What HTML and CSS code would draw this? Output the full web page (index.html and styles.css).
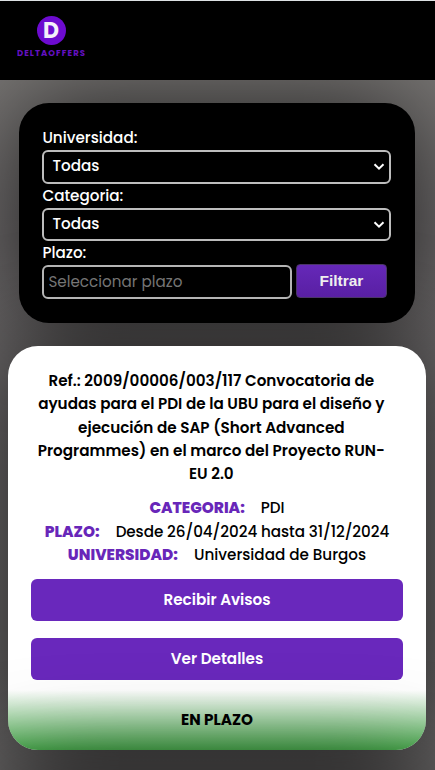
FILE: index.html
```html
<!DOCTYPE html>
<html lang="es">
<head>
<meta charset="utf-8">
<meta name="viewport" content="width=device-width, initial-scale=1">
<title>DeltaOffers</title>
<link rel="stylesheet" href="styles.css">
</head>
<body>
<header class="header">
  <a class="brand">
    <span class="brand-mark">D</span>
    <span class="brand-name">DELTAOFFERS</span>
  </a>
</header>
<main>
  <form class="filters">
    <label>Universidad:</label>
    <div class="select"><span>Todas</span><svg width="12" height="8" viewBox="0 0 12 8"><path d="M1.500 1.200 6 5.700l4.500-4.500"/></svg></div>
    <label>Categoria:</label>
    <div class="select"><span>Todas</span><svg width="12" height="8" viewBox="0 0 12 8"><path d="M1.500 1.200 6 5.700l4.500-4.500"/></svg></div>
    <label>Plazo:</label>
    <div class="row">
      <div class="input">Seleccionar plazo</div>
      <button type="button" class="filter-btn">Filtrar</button>
    </div>
  </form>
  <article class="card">
    <h2 class="title">
      <span>Ref.: 2009/00006/003/117 Convocatoria de</span>
      <span>ayudas para el PDI de la UBU para el diseño y</span>
      <span>ejecución de SAP (Short Advanced</span>
      <span>Programmes) en el marco del Proyecto RUN-</span>
      <span>EU 2.0</span>
    </h2>
    <div class="facts">
      <p><b>CATEGORIA:</b><span>PDI</span></p>
      <p><b>PLAZO:</b><span class="dates">Desde 26/04/2024 hasta 31/12/2024</span></p>
      <p><b>UNIVERSIDAD:</b><span>Universidad de Burgos</span></p>
    </div>
    <div class="action">Recibir Avisos</div>
    <div class="action">Ver Detalles</div>
    <div class="status">EN PLAZO</div>
  </article>
  <div class="upcoming"><article class="card"></article></div>
</main>
</body>
</html>
```
FILE: styles.css
```css
* { box-sizing: border-box; }
html { overflow: hidden; }
body {
  margin: 0;
  height: 770px;
  overflow: hidden;
  background: linear-gradient(#7c7a77, #6e6b6c 30%, #6a6868);
  color: #000;
  font: 500 15.2px/23.4px Poppins, Inter, sans-serif;
}
.header {
  height: 80px;
  background: #000;
  border-top: 1px solid #dde1e4;
  padding: 15px 0 0 16px;
}
.brand { display: flex; flex-direction: column; align-items: center; width: 70px; }
.brand-mark {
  width: 29px; height: 29px; border-radius: 50%;
  background: #6d0bd0; color: #f4f0fa;
  font: 700 22px/29px Poppins, sans-serif;
  text-align: center;
}
.brand-name {
  margin: 3px 0 0 1px;
  color: #6410c0;
  font: 700 8.5px/11px Poppins, sans-serif;
  letter-spacing: 1.05px;
  white-space: nowrap;
}
main { height: 690px; overflow: hidden; padding: 23px 8px 0; }
.filters {
  width: 395.600px; height: 220px;
  margin: 0 0 23px 11.400px;
  padding: 23px;
  border-radius: 30px;
  background: #000;
  color: #fff;
  box-shadow: 0 0 100px rgba(0, 0, 0, .7);
}
.filters label { display: block; height: 24.300px; line-height: 24px; white-space: nowrap; }
.select {
  display: flex; align-items: center; justify-content: space-between;
  width: 349px; height: 33.300px;
  border: 2px solid #bdbdbd; border-radius: 6px;
  padding: 0 4px 2px 8px;
}
.select svg { fill: none; stroke: #fff; stroke-width: 2; margin-top: 3px; }
.row { display: flex; gap: 4px; margin-top: -.4px; }
.input {
  width: 249.500px; height: 33.500px;
  border: 2px solid #b4b4b4; border-radius: 6px;
  padding: 0 4px; line-height: 30px;
  color: #757575; font-weight: 400; font-size: 15.2px; white-space: nowrap;
}
.filter-btn {
  width: 91px; height: 34px; margin: -1px 0 0; padding: 0;
  border: 1px solid #4b3568; border-radius: 4px;
  background: linear-gradient(#6528b8, #591fa3);
  color: #eee;
  font: 700 15.5px "Liberation Sans", sans-serif;
}
.card {
  width: 418px; height: 404px;
  padding: 23px 23.400px 0;
  overflow: hidden;
  border-radius: 30px;
  background: #fff;
  text-align: center;
  box-shadow: 0 0 100px rgba(0, 0, 0, .7);
}
.upcoming { position: relative; padding-top: 23px; }
.title { margin: 0 1px 10.800px -10.400px; font-size: 15.2px; font-weight: 600; line-height: 23.3px; }
.title span { display: block; white-space: nowrap; }
.facts { margin-bottom: 12.800px; line-height: 23.300px; }
.facts p { display: flex; justify-content: center; gap: 16px; margin: 0; white-space: nowrap; }
.facts b { color: #6826b9; font-weight: 800; font-size: 15.300px; }
.dates { letter-spacing: -.07px; }
.action {
  height: 42px; margin-bottom: 17px;
  border-radius: 6px;
  background: #6928bc; color: #fff;
  font-weight: 600; line-height: 42px;
}
.status {
  height: 60px; margin: -7px -24px 0;
  background: linear-gradient(rgba(76, 175, 80, 0), #4caf50);
  font-weight: 700; line-height: 60px;
}
```
